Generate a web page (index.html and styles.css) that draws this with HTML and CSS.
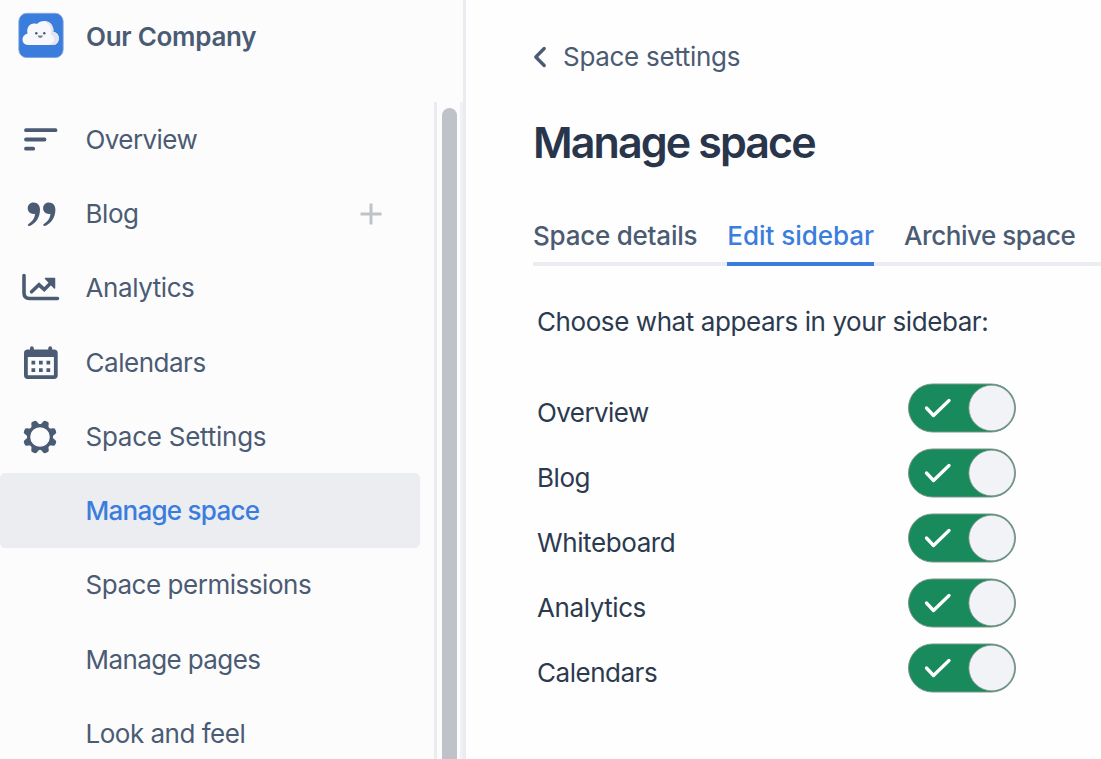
FILE: index.html
```html
<!DOCTYPE html>
<html lang="en">
<head>
<meta charset="utf-8">
<title>Manage space</title>
<link rel="stylesheet" href="styles.css">
</head>
<body>
<div class="app">
  <aside class="sidebar">
    <header class="brand">
      <svg class="logo" width="46" height="46" viewBox="0 0 46 46">
        <rect x=".8" y="1.300" width="44.400" height="44.400" rx="8" fill="#3b7ddd" stroke="#8daad5" stroke-width=".8"/>
        <path d="M10 33C3 33 2.500 23 9.500 21.500C8 14.500 13 10 19 12C23 7 33 8 34.500 15C36 17 35.500 18.500 35.500 20C43 20.500 42.500 33 35 33Z" fill="#f7f8fb"/>
        <path d="M27 9.500C33 9.500 36 14 35 20C43 20.500 42.500 33 35 33H31C37 31 38 25 32.500 22.500C34 17 32 12.500 27 9.500Z" fill="#e3e6ee"/>
        <circle cx="18.300" cy="21.300" r="1.200" fill="#44546f"/><circle cx="26.300" cy="21.300" r="1.200" fill="#44546f"/>
        <path d="M19.700 23.500h5.200c-.4 3.300-4.800 3.300-5.200 0Z" fill="#75849b"/>
      </svg>
      <span class="company">Our Company</span>
    </header>
    <div class="side-body">
      <nav class="menu">
        <a class="item"><svg class="icon" viewBox="0 0 40 40"><path d="M6 10.200H35.500M6 19.500H24.500M6 28.700H13.200" fill="none" stroke="#4b5b73" stroke-width="3.800" stroke-linecap="round"/></svg><span class="overview">Overview</span></a>
        <a class="item"><svg class="icon" viewBox="0 0 40 40"><g fill="#4b5b73"><path id="q" d="M13.400 8.500C17.400 8.500 20 11.300 20 15.800C20 23.500 15.500 29.800 9.600 32C8 32.500 7.200 30.800 8.500 30C12 27.600 14.800 24.500 15 19.700C11.500 20.700 7.700 18.200 7.700 14.200C7.700 11 10 8.500 13.400 8.500Z"/><use href="#q" x="15.400"/></g></svg><span class="blog">Blog</span>
          <svg class="plus" width="24" height="24" viewBox="0 0 24 24"><path d="M12 1.500V22.500M1.500 12H22.500" stroke="#bfc2c8" stroke-width="3"/></svg></a>
        <a class="item"><svg class="icon" viewBox="0 0 40 40"><g fill="none" stroke="#4b5b73" stroke-width="3.600" stroke-linecap="round"><path d="M4 7.500V25Q4 30.500 9.500 30.500H37.500"/><path d="M11.600 23.800L19 16.800L24.300 21.600L33 12.800"/></g><path d="M25.500 10.500H34.500V20Z" fill="#4b5b73" stroke="#4b5b73" stroke-width="1.500" stroke-linejoin="round"/></svg><span class="analytics">Analytics</span></a>
        <a class="item"><svg class="icon" viewBox="0 0 40 40"><g fill="#4b5b73"><path fill-rule="evenodd" d="M9 6.500H34Q37.700 6.500 37.700 10.200V32.300Q37.700 36 34 36H7.700Q4 36 4 32.300V10.200Q4 6.500 7.700 6.500ZM7.800 14V32.200H33.900V14Z"/><rect x="10" y="3.300" width="3.800" height="7" rx="1.900"/><rect x="28.300" y="3.300" width="3.800" height="7" rx="1.900"/><path d="M11.500 17.800h3.700v3.700h-3.700zM19 17.800h3.700v3.700H19zM26.500 17.800h3.700v3.700h-3.700zM11.500 25.200h3.700v3.700h-3.700zM19 25.200h3.700v3.700H19zM26.500 25.200h3.700v3.700h-3.700z"/></g></svg><span class="calendars">Calendars</span></a>
        <a class="item"><svg class="icon" viewBox="-20 -20 40 40"><g fill="#4b5b73"><path fill-rule="evenodd" d="M0-13A13 13 0 1 1 0 13A13 13 0 1 1 0-13ZM0-9.800A9.800 9.800 0 1 0 0 9.800A9.800 9.800 0 1 0 0-9.800Z"/><g transform="rotate(22.500)"><g id="t"><path id="tooth" d="M-4.300-11.500L-3-15.500Q-2.500-17-1-17H1Q2.500-17 3-15.500L4.300-11.500Z"/><use href="#tooth" transform="rotate(90)"/><use href="#tooth" transform="rotate(180)"/><use href="#tooth" transform="rotate(270)"/></g><use href="#t" transform="rotate(45)"/></g></g></svg><span class="settings">Space Settings</span></a>
        <a class="item sub active"><span class="manage">Manage space</span></a>
        <a class="item sub"><span class="permissions">Space permissions</span></a>
        <a class="item sub"><span class="pages">Manage pages</span></a>
        <a class="item sub"><span class="look">Look and feel</span></a>
      </nav>
      <div class="scroll"><div class="thumb"></div></div>
    </div>
  </aside>
  <main class="content">
    <a class="back"><svg width="14" height="22" viewBox="0 0 14 22"><path d="M11.200 2.500L2.800 11L11.200 19.500" fill="none" stroke="#4b5b73" stroke-width="3.300" stroke-linecap="round" stroke-linejoin="round"/></svg><span class="back-text">Space settings</span></a>
    <h1><span class="title">Manage space</span></h1>
    <div class="tabs">
      <a class="tab"><span class="details">Space details</span></a>
      <a class="tab current"><span class="edit">Edit sidebar</span></a>
      <a class="tab"><span class="archive">Archive space</span></a>
    </div>
    <p class="intro"><span class="choose">Choose what appears in your sidebar:</span></p>
    <div class="options">
      <div class="option"><span class="overview">Overview</span><svg class="toggle" viewBox="0 0 110 50"><rect x="1.500" y="1" width="107" height="48" rx="24" fill="#188a5b" stroke="#7d9589"/><circle cx="84.700" cy="25" r="22.800" fill="#f2f3f6" stroke="#919b98" stroke-width=".8"/><path d="M19.500 25L26.500 32.500L42 17.500" fill="none" stroke="#fff" stroke-width="3.300" stroke-linecap="round" stroke-linejoin="round"/></svg></div>
      <div class="option"><span class="blog">Blog</span><svg class="toggle" viewBox="0 0 110 50"><rect x="1.500" y="1" width="107" height="48" rx="24" fill="#188a5b" stroke="#7d9589"/><circle cx="84.700" cy="25" r="22.800" fill="#f2f3f6" stroke="#919b98" stroke-width=".8"/><path d="M19.500 25L26.500 32.500L42 17.500" fill="none" stroke="#fff" stroke-width="3.300" stroke-linecap="round" stroke-linejoin="round"/></svg></div>
      <div class="option"><span class="whiteboard">Whiteboard</span><svg class="toggle" viewBox="0 0 110 50"><rect x="1.500" y="1" width="107" height="48" rx="24" fill="#188a5b" stroke="#7d9589"/><circle cx="84.700" cy="25" r="22.800" fill="#f2f3f6" stroke="#919b98" stroke-width=".8"/><path d="M19.500 25L26.500 32.500L42 17.500" fill="none" stroke="#fff" stroke-width="3.300" stroke-linecap="round" stroke-linejoin="round"/></svg></div>
      <div class="option"><span class="analytics">Analytics</span><svg class="toggle" viewBox="0 0 110 50"><rect x="1.500" y="1" width="107" height="48" rx="24" fill="#188a5b" stroke="#7d9589"/><circle cx="84.700" cy="25" r="22.800" fill="#f2f3f6" stroke="#919b98" stroke-width=".8"/><path d="M19.500 25L26.500 32.500L42 17.500" fill="none" stroke="#fff" stroke-width="3.300" stroke-linecap="round" stroke-linejoin="round"/></svg></div>
      <div class="option"><span class="calendars">Calendars</span><svg class="toggle" viewBox="0 0 110 50"><rect x="1.500" y="1" width="107" height="48" rx="24" fill="#188a5b" stroke="#7d9589"/><circle cx="84.700" cy="25" r="22.800" fill="#f2f3f6" stroke="#919b98" stroke-width=".8"/><path d="M19.500 25L26.500 32.500L42 17.500" fill="none" stroke="#fff" stroke-width="3.300" stroke-linecap="round" stroke-linejoin="round"/></svg></div>
    </div>
  </main>
</div>
</body>
</html>
```
FILE: styles.css
```css
* { box-sizing: border-box; }
body { margin: 0; overflow: hidden; background: #fefefe; font: 400 26px/34px Inter, "Liberation Sans", sans-serif; color: #2c3a50; }
.app { display: flex; width: 1101px; height: 759px; overflow: hidden; }
.sidebar { display: flex; flex-direction: column; flex: none; width: 466px; height: 759px; background: #fcfcfd; border-right: 3px solid #ebecf1; color: #4b5b73; }
.brand { display: flex; gap: 22px; height: 102px; flex: none; padding: 12px 0 0 18px; }
.logo { flex: none; }
.company { font-weight: 600; padding-top: 8px; line-height: 34px; white-space: nowrap; letter-spacing: -.28px; }
.side-body { display: flex; flex: 1; min-height: 0; }
.menu { width: 420px; flex: none; }
.item { display: flex; align-items: center; height: 74.300px; padding: 1px 0 0 20px; white-space: nowrap; }
.icon { width: 40px; height: 40px; margin-right: 25.500px; flex: none; }
.plus { margin-left: auto; margin-right: 37px; }
.item.sub { padding-left: 85.500px; }
.active { background: #ecedf1; border-radius: 5px; color: #3b7ddd; font-weight: 500; }
.scroll { width: 29px; margin-left: 14px; border-left: 3px solid #ebecf1; border-right: 3px solid #f0f1f4; padding: 6px 0 0 5px; }
.thumb { width: 15px; height: 700px; border-radius: 8px; background: #bfc2c8; }
.content { flex: 1; min-width: 0; padding: 40px 0 0 67px; white-space: nowrap; }
.back { display: flex; align-items: center; gap: 16px; height: 34px; color: #4b5b73; }
h1 { margin: 40px 0 0; height: 56px; font-size: 43px; line-height: 56px; font-weight: 600; color: #29354a; }
.tabs { display: flex; gap: 30px; height: 50px; margin-top: 46px; color: #4b5b73; font-weight: 500; box-shadow: inset 0 -4px #ecedf1; }
.tab { height: 50px; padding-top: 3px; }
.current { color: #3b7ddd; box-shadow: inset 0 -4px #3b7ddd; }
.intro { margin: 39px 0 0 4px; }
.options { width: 480px; margin: 41px 0 0 4px; }
.option { display: flex; align-items: center; justify-content: space-between; height: 65px; }
.toggle { width: 110px; height: 50px; margin-bottom: 9px; }

/* optical tracking per label */
.overview { letter-spacing: -.58px; }
.blog { letter-spacing: -.45px; }
.analytics { letter-spacing: -.42px; }
.calendars { letter-spacing: -.48px; }
.whiteboard { letter-spacing: -.4px; }
.settings { letter-spacing: -.25px; }
.manage { letter-spacing: -.73px; }
.permissions { letter-spacing: -.46px; }
.pages { letter-spacing: -.6px; }
.look { letter-spacing: -.49px; }
.back-text { letter-spacing: -.3px; }
.title { letter-spacing: -1.900px; }
.details { letter-spacing: -.23px; }
.edit { letter-spacing: -.03px; }
.archive { letter-spacing: -.45px; }
.choose { letter-spacing: -.42px; }
```
